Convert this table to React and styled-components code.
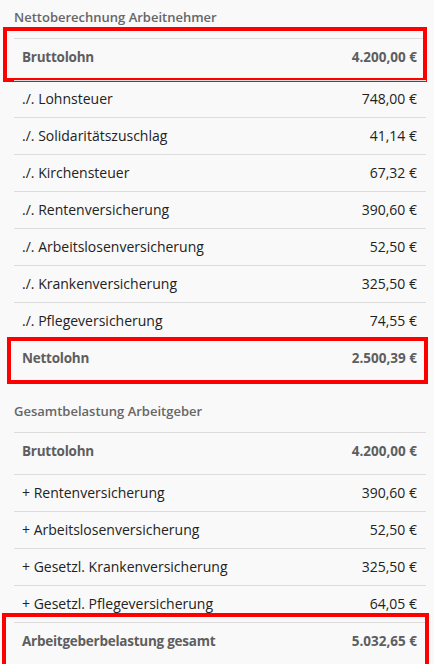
import React from "react";
import styled, { createGlobalStyle } from "styled-components";

const Global = createGlobalStyle`
  html, body { margin: 0; padding: 0; background: #f9f9f9; }
  body { font-family: "Open Sans", "Noto Sans", sans-serif; -webkit-font-smoothing: antialiased; }
`;

const Page = styled.div`
  width: 434px;
  height: 664px;
  overflow: hidden;
  padding: 0 8px 0 14px;
  box-sizing: border-box;
  background: #f9f9f9;
`;

const Section = styled.section`
  margin-top: ${(p) => (p.$first ? "0" : "13px")};
`;

const Heading = styled.h3`
  margin: 0;
  padding: 7px 0 11px;
  font-size: 13px;
  line-height: 20px;
  font-weight: 600;
  color: #666;
`;

const Table = styled.div`
  display: flex;
  flex-direction: column;
`;

const Row = styled.div`
  position: relative;
  display: flex;
  justify-content: space-between;
  align-items: center;
  box-sizing: border-box;
  height: ${(p) => (p.$total ? "42px" : "37px")};
  padding: ${(p) => (p.$total ? "0 9px 6px 8px" : "0 9px 2px 8px")};
  border-top: 1px solid #dcdcdc;
  font-size: ${(p) => (p.$total ? "13.5px" : "14px")};
  font-weight: ${(p) => (p.$total ? 700 : 400)};
  color: ${(p) => (p.$total ? "#5e5e5e" : "#222")};
`;

const Label = styled.span`
  letter-spacing: ${(p) => (p.$tight ? "-0.25px" : "0")};
`;
const Value = styled.span`
  white-space: nowrap;
`;

const Highlight = styled.div`
  position: absolute;
  top: ${(p) => p.$t}px;
  bottom: ${(p) => p.$b}px;
  left: ${(p) => p.$l}px;
  right: ${(p) => p.$r}px;
  border: 4px solid #f00;
  pointer-events: none;
`;

const net = [
  ["./. Lohnsteuer", "748,00 €"],
  ["./. Solidaritätszuschlag", "41,14 €"],
  ["./. Kirchensteuer", "67,32 €"],
  ["./. Rentenversicherung", "390,60 €"],
  ["./. Arbeitslosenversicherung", "52,50 €"],
  ["./. Krankenversicherung", "325,50 €"],
  ["./. Pflegeversicherung", "74,55 €"],
];

const employer = [
  ["+ Rentenversicherung", "390,60 €"],
  ["+ Arbeitslosenversicherung", "52,50 €"],
  ["+ Gesetzl. Krankenversicherung", "325,50 €"],
  ["+ Gesetzl. Pflegeversicherung", "64,05 €"],
];

function TotalRow({ label, value, box }) {
  return (
    <Row $total>
      <Label $tight>{label}</Label>
      <Value>{value}</Value>
      {box && <Highlight $t={box[0]} $b={box[1]} $l={box[2]} $r={box[3]} />}
    </Row>
  );
}

export default function App() {
  return (
    <Page>
      <Global />
      <Section $first>
        <Heading>Nettoberechnung Arbeitnehmer</Heading>
        <Table>
          <TotalRow label="Bruttolohn" value="4.200,00 €" box={[-12, -2, -11, -1]} />
          {net.map(([l, v]) => (
            <Row key={l}>
              <Label>{l}</Label>
              <Value>{v}</Value>
            </Row>
          ))}
          <TotalRow label="Nettolohn" value="2.500,39 €" box={[-3, -3, -7, -2]} />
        </Table>
      </Section>
      <Section>
        <Heading>Gesamtbelastung Arbeitgeber</Heading>
        <Table>
          <TotalRow label="Bruttolohn" value="4.200,00 €" />
          {employer.map(([l, v]) => (
            <Row key={l}>
              <Label>{l}</Label>
              <Value>{v}</Value>
            </Row>
          ))}
          <TotalRow label="Arbeitgeberbelastung gesamt" value="5.032,65 €" box={[-10, -4, -12, -3]} />
        </Table>
      </Section>
    </Page>
  );
}
